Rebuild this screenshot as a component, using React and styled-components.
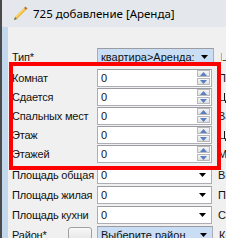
import React from 'react'
import styled, { createGlobalStyle } from 'styled-components'

const GlobalStyle = createGlobalStyle`
  html, body {
    margin: 0;
    padding: 0;
  }
  body {
    width: 226px;
    height: 238px;
    overflow: hidden;
    background: #f0f0f0;
    font-family: "Liberation Sans", Arial, sans-serif;
  }
`

const Window = styled.div`
  position: relative;
  width: 226px;
  height: 238px;
  overflow: hidden;
  display: flex;
  flex-direction: column;
  background: #e4e8ed;
  border-left: 2px solid #4a4a4a;
  box-sizing: border-box;
`

const TitleBar = styled.div`
  height: 27px;
  flex: none;
  display: flex;
  align-items: center;
  gap: 5px;
  padding-left: 10px;
  font-family: "Noto Sans", "Liberation Sans", sans-serif;
  font-size: 11.5px;
  color: #000;
`

const Body = styled.div`
  flex: 1;
  display: flex;
`

const Strip = styled.div`
  width: 6px;
  flex: none;
  background: #c3d7ed;
`

const Content = styled.div`
  flex: 1;
  background: #f0f0f0;
  padding: 20px 0 0 4px;
  display: flex;
  flex-direction: column;
`

const Row = styled.div`
  height: ${p => p.$h || 19}px;
  margin-bottom: ${p => p.$mb || 0}px;
  display: flex;
  align-items: center;
  white-space: nowrap;
`

const Label = styled.div`
  width: ${p => p.$w || 85}px;
  flex: none;
  font-size: 11px;
  letter-spacing: -0.2px;
  color: #111;
`

const Field = styled.div`
  width: ${p => p.$w || 115}px;
  height: 18px;
  flex: none;
  box-sizing: border-box;
  display: flex;
  align-items: center;
  border: 1px solid #acaeb4;
  border-top-color: #9a9ca2;
  background: ${p => (p.$sel ? '#c9ddf4' : '#fff')};
  font-size: 11px;
  color: #111;
`

const Value = styled.span`
  flex: 1;
  overflow: hidden;
  padding-left: 3px;
`

const SpinCol = styled.div`
  display: flex;
  flex-direction: column;
  gap: 1px;
  margin-right: 1px;
`

const SpinBtn = styled.div`
  width: 13px;
  height: 7px;
  box-sizing: border-box;
  border: 1px solid #b7b9bd;
  background: linear-gradient(#f6f6f6, #e0e0e0);
  display: flex;
  align-items: center;
  justify-content: center;
`

const Arrow = styled.svg`
  flex: none;
  margin: 0 5px 0 3px;
`

const Side = styled.div`
  margin-left: 6px;
  font-size: 11px;
  color: #111;
  ${p =>
    p.$mark &&
    `
    background: linear-gradient(90deg, #d9b200 0 3px, #111 3px);
    -webkit-background-clip: text;
    background-clip: text;
    color: transparent;
  `}
`

const PickButton = styled.div`
  width: 24px;
  height: 16px;
  margin-right: 5px;
  box-sizing: border-box;
  border: 1px solid #9ea0a4;
  border-radius: 3px;
  background: linear-gradient(#f8f8f8, #e2e2e2);
`

const Highlight = styled.div`
  position: absolute;
  left: 7px;
  top: 62px;
  width: 212px;
  height: 108px;
  box-sizing: border-box;
  border: 4px solid #ff0000;
  pointer-events: none;
`

const Pencil = () => (
  <svg width="16" height="16" viewBox="0 0 16 16">
    <polygon points="2,14 3,11 12,2 14,4 5,13" fill="#f2b635" />
    <polygon points="3,11 12,2 13,3 4,12" fill="#f8d37a" />
    <polygon points="12,2 13.5,0.5 15.5,2.5 14,4" fill="#b8722c" />
    <polygon points="2,14 3,11 5,13" fill="#6b6b6b" />
  </svg>
)

const Tri = ({ up }) => (
  <svg width="7" height="4" viewBox="0 0 7 4">
    <polygon points={up ? '0,4 3.5,0 7,4' : '0,0 7,0 3.5,4'} fill="#5a7fc0" />
  </svg>
)

const DropArrow = () => (
  <Arrow width="7" height="4" viewBox="0 0 7 4">
    <polygon points="0,0 7,0 3.5,4" fill="#000" />
  </Arrow>
)

const spinRows = [
  { label: 'Комнат', side: 'Прод' },
  { label: 'Сдается', side: 'Цена', mark: true },
  { label: 'Спальных мест', side: 'Валюта' },
  { label: 'Этаж', side: 'Цена', mark: true },
  { label: 'Этажей', side: 'Метро' },
]

const areaRows = [
  { label: 'Площадь общая', side: 'Выход' },
  { label: 'Площадь жилая', side: 'Под' },
  { label: 'Площадь кухни', side: 'Стены' },
]

export default function App() {
  return (
    <>
      <GlobalStyle />
      <Window>
        <TitleBar>
          <Pencil />
          <span>725 добавление [Аренда]</span>
        </TitleBar>
        <Body>
          <Strip />
          <Content>
            <Row $h={19} $mb={2}>
              <Label>Тип*</Label>
              <Field $w={117} $sel>
                <Value>квартира&gt;Аренда:</Value>
                <DropArrow />
              </Field>
              <Side $mark>Цена</Side>
            </Row>
            {spinRows.map(r => (
              <Row key={r.label}>
                <Label>{r.label}</Label>
                <Field>
                  <Value>0</Value>
                  <SpinCol>
                    <SpinBtn><Tri up /></SpinBtn>
                    <SpinBtn><Tri /></SpinBtn>
                  </SpinCol>
                </Field>
                <Side $mark={r.mark}>{r.side}</Side>
              </Row>
            ))}
            <Row $h={2} />
            {areaRows.map(r => (
              <Row key={r.label} $h={20}>
                <Label>{r.label}</Label>
                <Field>
                  <Value>0</Value>
                  <DropArrow />
                </Field>
                <Side>{r.side}</Side>
              </Row>
            ))}
            <Row $h={20}>
              <Label $w={56}>Район*</Label>
              <PickButton />
              <Field $w={116} $sel>
                <Value>Выберите район</Value>
                <DropArrow />
              </Field>
              <Side>Кол</Side>
            </Row>
          </Content>
        </Body>
        <Highlight />
      </Window>
    </>
  )
}
